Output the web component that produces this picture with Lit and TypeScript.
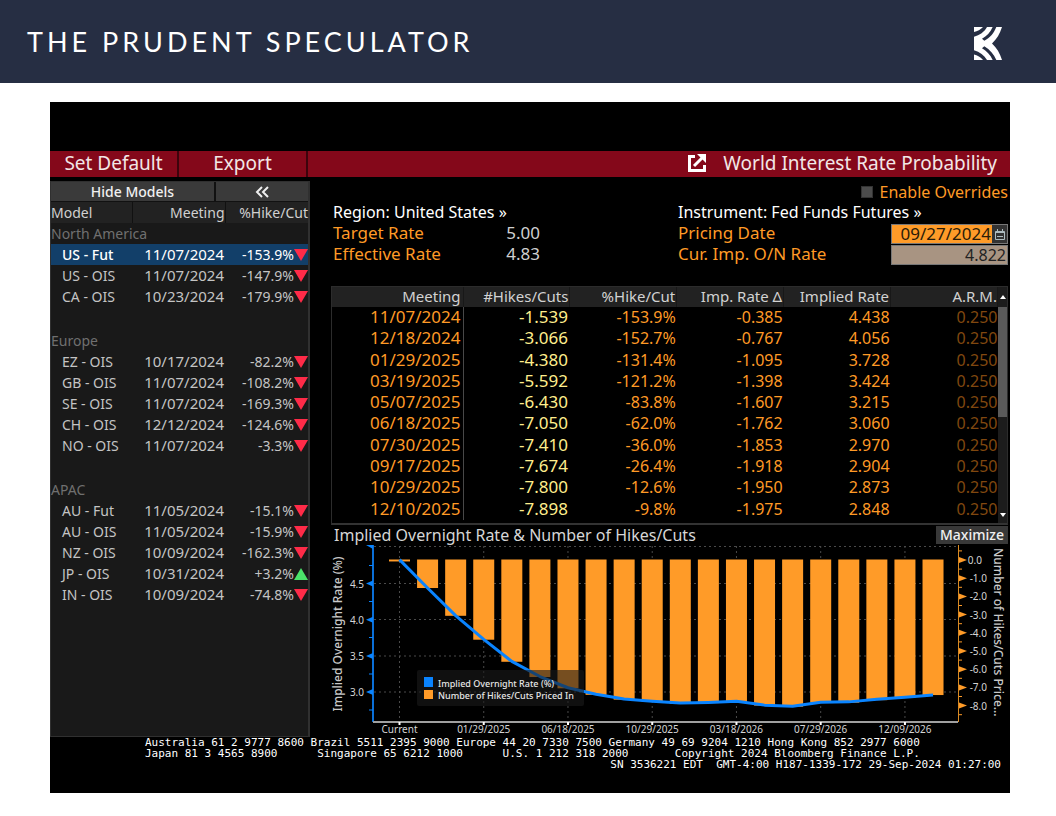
import { LitElement, html, svg, css } from "lit";
import { customElement } from "lit/decorators.js";
import { classMap } from "lit/directives/class-map.js";

type Model = [name: string, meeting: string, change: string, selected?: boolean];

const GROUPS: { name: string; rows: Model[] }[] = [
  {
    name: "North America",
    rows: [
      ["US - Fut", "11/07/2024", "-153.9%", true],
      ["US - OIS", "11/07/2024", "-147.9%"],
      ["CA - OIS", "10/23/2024", "-179.9%"],
    ],
  },
  {
    name: "Europe",
    rows: [
      ["EZ - OIS", "10/17/2024", "-82.2%"],
      ["GB - OIS", "11/07/2024", "-108.2%"],
      ["SE - OIS", "11/07/2024", "-169.3%"],
      ["CH - OIS", "12/12/2024", "-124.6%"],
      ["NO - OIS", "11/07/2024", "-3.3%"],
    ],
  },
  {
    name: "APAC",
    rows: [
      ["AU - Fut", "11/05/2024", "-15.1%"],
      ["AU - OIS", "11/05/2024", "-15.9%"],
      ["NZ - OIS", "10/09/2024", "-162.3%"],
      ["JP - OIS", "10/31/2024", "+3.2%"],
      ["IN - OIS", "10/09/2024", "-74.8%"],
    ],
  },
];

const MEETINGS: string[][] = [
  ["11/07/2024", "-1.539", "-153.9%", "-0.385", "4.438", "0.250"],
  ["12/18/2024", "-3.066", "-152.7%", "-0.767", "4.056", "0.250"],
  ["01/29/2025", "-4.380", "-131.4%", "-1.095", "3.728", "0.250"],
  ["03/19/2025", "-5.592", "-121.2%", "-1.398", "3.424", "0.250"],
  ["05/07/2025", "-6.430", "-83.8%", "-1.607", "3.215", "0.250"],
  ["06/18/2025", "-7.050", "-62.0%", "-1.762", "3.060", "0.250"],
  ["07/30/2025", "-7.410", "-36.0%", "-1.853", "2.970", "0.250"],
  ["09/17/2025", "-7.674", "-26.4%", "-1.918", "2.904", "0.250"],
  ["10/29/2025", "-7.800", "-12.6%", "-1.950", "2.873", "0.250"],
  ["12/10/2025", "-7.898", "-9.8%", "-1.975", "2.848", "0.250"],
];

// Chart series, one entry per meeting starting from the current rate.
const CUTS = [0.08, 1.539, 3.066, 4.38, 5.592, 6.43, 7.05, 7.41, 7.674, 7.8, 7.898, 7.86, 7.8, 8, 8.06, 7.84, 7.84, 7.7, 7.57, 7.42];
const RATES = [4.83, 4.438, 4.056, 3.728, 3.424, 3.215, 3.06, 2.97, 2.904, 2.873, 2.848, 2.857, 2.873, 2.82, 2.805, 2.86, 2.865, 2.9, 2.93, 2.96];
const DATES = ["Current", "01/29/2025", "06/18/2025", "10/29/2025", "03/18/2026", "07/29/2026", "12/09/2026"];

const chartX = (i: number) => 399.5 + i * 28.08;
const rateY = (r: number) => 583.5 + (4.5 - r) * 72.4;
const cutY = (c: number) => 560 + c * 18.2;

@customElement("brand-bar")
class BrandBar extends LitElement {
  static styles = css`
    :host {
      display: block;
    }
    .bar {
      display: flex;
      align-items: center;
      justify-content: space-between;
      height: 83px;
      box-sizing: border-box;
      padding: 0 54px 0 27px;
      background: #262e43;
      color: #fff;
    }
    .name {
      margin: 0;
      font: 400 27px/40px Lato, sans-serif;
      letter-spacing: 4px;
    }
    .logo {
      display: block;
      width: 28px;
      height: 33px;
      margin-top: 4px;
    }
  `;
  render() {
    return html`<header class="bar">
      <h1 class="name">THE PRUDENT SPECULATOR</h1>
      <svg class="logo" viewBox="102 82 84 98" preserveAspectRatio="none" fill="#fff" aria-hidden="true">
        <path d="M102 82H129C122 90 112 95 102 97Z" />
        <path
          d="M102 111C119 106 133 97 141 82H158C151 98 140 109 126 117L133 123C150 114 161 101 169 82H186C180 102 170 118 156 131C170 144 180 160 186 180H169C161 162 150 149 133 139L126 145C140 154 151 164 158 180H141C133 166 119 156 102 151Z"
        />
        <path d="M102 164C112 166 122 172 129 180H102Z" />
      </svg>
    </header>`;
  }
}

@customElement("model-list")
class ModelList extends LitElement {
  static styles = css`
    :host {
      display: block;
      box-sizing: border-box;
      border: 1px solid #303030;
      border-right-width: 2px;
      background: #191919;
      color: #c4c4c4;
      font: 14px/21px "Noto Sans", sans-serif;
    }
    .tools {
      display: grid;
      grid-template-columns: 163px 1fr;
      gap: 2px;
      background: #111;
      padding-bottom: 1px;
    }
    button {
      height: 19px;
      padding: 0;
      border: 0;
      background: #3a3a3a;
      color: #f0f0f0;
      font: 500 14px/19px "Noto Sans", sans-serif;
    }
    .chev {
      display: block;
      margin: auto;
    }
    table {
      width: 100%;
      border-collapse: collapse;
      table-layout: fixed;
    }
    .c1 {
      width: 81px;
    }
    .c2 {
      width: 93px;
    }
    th,
    td {
      padding: 0;
      height: 21px;
      font-weight: 400;
      text-align: right;
      white-space: nowrap;
    }
    thead th {
      background: #222;
      color: #d0d0d0;
      border-right: 1px solid #111;
    }
    thead th:last-child {
      border-right: 0;
    }
    thead th:first-child,
    .group {
      text-align: left;
    }
    .group {
      color: #707070;
    }
    .gap td {
      height: 23px;
    }
    .name {
      text-align: left;
      padding-left: 11px;
    }
    .date {
      font-size: 15px;
      padding-right: 1px;
    }
    .sel {
      background: #123f69;
      color: #fff;
      font-weight: 500;
    }
    .sel th {
      font-weight: 500;
    }
    .tri {
      display: inline-block;
      width: 14px;
      height: 12px;
      vertical-align: -1px;
    }
  `;
  render() {
    return html`<div class="tools">
        <button type="button">Hide Models</button>
        <button type="button" aria-label="Collapse">
          <svg class="chev" width="14" height="12" viewBox="0 0 14 12" fill="none" stroke="#eee" stroke-width="2">
            <path d="M7 1L2 6L7 11M13 1L8 6L13 11" />
          </svg>
        </button>
      </div>
      <table>
        <colgroup>
          <col class="c1" />
          <col class="c2" />
          <col />
        </colgroup>
        <thead>
          <tr>
            <th scope="col">Model</th>
            <th scope="col">Meeting</th>
            <th scope="col">%Hike/Cut</th>
          </tr>
        </thead>
        ${GROUPS.map(
          (g, i) => html`<tbody>
            ${i ? html`<tr class="gap"><td colspan="3"></td></tr>` : ""}
            <tr>
              <th class="group" scope="rowgroup" colspan="3">${g.name}</th>
            </tr>
            ${g.rows.map(
              ([name, date, change, selected]) => html`<tr class=${classMap({ sel: !!selected })}>
                <th class="name" scope="row">${name}</th>
                <td class="date">${date}</td>
                <td>${change}<svg class="tri" viewBox="0 0 14 12" aria-hidden="true">
                    ${change.startsWith("+")
                      ? svg`<path d="M0 12L7 0L14 12Z" fill="#4be36a" />`
                      : svg`<path d="M0 0H14L7 12Z" fill="#ff2b48" />`}
                  </svg></td>
              </tr>`
            )}
          </tbody>`
        )}
      </table>`;
  }
}

@customElement("meeting-table")
class MeetingTable extends LitElement {
  static styles = css`
    :host {
      display: grid;
      grid-template-columns: 1fr 9px;
      align-items: start;
      box-sizing: border-box;
      height: 239px;
      border: 1px solid #2c2c2c;
      border-bottom: 2px solid #333;
      color: #ff9a26;
      font: 16px/20px "Noto Sans", sans-serif;
    }
    table {
      width: 100%;
      height: 233px;
      border-collapse: collapse;
      table-layout: fixed;
    }
    .first {
      width: 131px;
    }
    th,
    td {
      padding: 0 1px 0 0;
      font-weight: 400;
      text-align: right;
      vertical-align: baseline;
      white-space: nowrap;
    }
    tr > :first-child {
      padding-right: 2px;
    }
    tr > :last-child {
      padding-right: 0;
    }
    thead th {
      height: 20px;
      line-height: 19px;
      font-size: 15px;
      background: #222;
      color: #d2d2d2;
      border-right: 1px solid #181818;
    }
    tbody th {
      font-size: 17px;
      border-right: 1px solid #484848;
    }
    tbody .cuts {
      padding-right: 2px;
      font-size: 17px;
      color: #ffee8c;
    }
    .arm {
      color: #80480f;
    }
    .scroll {
      display: flex;
      flex-direction: column;
      align-items: center;
      height: 236px;
      background: #1c1c1c;
    }
    .thumb {
      width: 9px;
      height: 110px;
      background: #5a5a5a;
    }
    .space {
      flex: 1;
    }
    .arrow {
      display: block;
      width: 10px;
      height: 20px;
    }
  `;
  render() {
    return html`<table>
        <colgroup>
          <col class="first" />
          <col span="5" />
        </colgroup>
        <thead>
          <tr>
            ${["Meeting", "#Hikes/Cuts", "%Hike/Cut", "Imp. Rate Δ", "Implied Rate", "A.R.M."].map(
              (h) => html`<th scope="col">${h}</th>`
            )}
          </tr>
        </thead>
        <tbody>
          ${MEETINGS.map(
            ([date, cuts, pct, delta, rate, arm]) => html`<tr>
              <th scope="row">${date}</th>
              <td class="cuts">${cuts}</td>
              <td>${pct}</td>
              <td>${delta}</td>
              <td>${rate}</td>
              <td class="arm">${arm}</td>
            </tr>`
          )}
        </tbody>
      </table>
      <div class="scroll">
        <svg class="arrow" viewBox="0 0 10 20"><path d="M2 12L5 8L8 12Z" fill="#fff" /></svg>
        <div class="thumb"></div>
        <div class="space"></div>
        <svg class="arrow" viewBox="0 0 10 20"><path d="M2 10H8L5 14Z" fill="#fff" /></svg>
      </div>`;
  }
}

@customElement("rate-chart")
class RateChart extends LitElement {
  static styles = css`
    :host {
      display: block;
    }
    .chart {
      display: block;
      width: 100%;
      height: auto;
      overflow: visible;
      font-family: "Noto Sans", sans-serif;
    }
    .tick {
      font-size: 10px;
      fill: #d4d4d4;
    }
    .legend {
      font-size: 9px;
      font-weight: 500;
      fill: #e6e6e6;
    }
    .title {
      font-size: 12px;
      font-weight: 500;
      fill: #c8c8c8;
    }
    .grid {
      stroke: #4a4a4a;
      stroke-dasharray: 2 3;
    }
    .line {
      fill: none;
      stroke: #0a84ff;
      stroke-width: 3;
      stroke-linejoin: round;
    }
  `;
  render() {
    const minorLeft = [565.5, 601.5, 637.5, 674, 710];
    return html`<svg class="chart" viewBox="331 545 677 192" role="img" aria-label="Implied overnight rate and number of hikes/cuts">
      ${[546.5, 583.5, 619.5, 656, 692].map((y) => svg`<path class="grid" d="M374 ${y}H957" />`)}
      ${DATES.map((_, i) => svg`<path class="grid" d="M${chartX(i * 3)} 546V722" />`)}
      ${CUTS.map((c, i) => svg`<rect x=${chartX(i) - 10.5} y="559.5" width="21" height=${cutY(c) - 559.5} fill="#ff9b28" />`)}
      <polyline class="line" points=${RATES.map((r, i) => `${chartX(i)},${rateY(r)}`).join(" ")} />
      <rect x="417" y="670" width="167" height="36" rx="2" fill="#1a1a1a" fill-opacity="0.6" />
      <rect x="424" y="677" width="9" height="10" fill="#0a84ff" />
      <rect x="424" y="690" width="9" height="9" fill="#ff9b28" />
      <text class="legend" x="438" y="687">Implied Overnight Rate (%)</text>
      <text class="legend" x="438" y="699">Number of Hikes/Cuts Priced In</text>

      <path d="M373 545V722" stroke="#0a6fd8" stroke-width="2" />
      <path d="M366 545L373 549V545Z" fill="#0a84ff" />
      ${minorLeft.map((y) => svg`<path d="M369 ${y}H373" stroke="#0a84ff" />`)}
      ${["4.5", "4.0", "3.5", "3.0"].map((t) => {
        const y = rateY(Number(t));
        return svg`<path d="M366 ${y}L373 ${y - 3}V${y + 3}Z" fill="#0a84ff" />
          <text class="tick" x="364" y=${y + 4} text-anchor="end">${t}</text>`;
      })}

      <path d="M373 722H958" stroke="#a0a0a0" stroke-width="2" />
      ${DATES.map(
        (d, i) => svg`<path d="M${chartX(i * 3)} 722V725" stroke="#fff" stroke-width="2" />
          <text class="tick" x=${chartX(i * 3)} y="733" text-anchor="middle">${d}</text>`
      )}

      <path d="M958.5 545V722" stroke="#d98a22" stroke-width="1" />
      ${[-0.5, 0, 1, 2, 3, 4, 5, 6, 7, 8].map(
        (c) => svg`<path d="M959 ${cutY(c < 0 ? c : c + 0.5)}H962" stroke="#ff9b28" />`
      )}
      ${[0, 1, 2, 3, 4, 5, 6, 7, 8].map(
        (c) => svg`<path d="M967 ${cutY(c)}L959 ${cutY(c) - 3}V${cutY(c) + 3}Z" fill="#ff9b28" />
          <text class="tick" x=${c ? 987 : 982} y=${cutY(c) + 4} text-anchor="end">${c ? "-" : ""}${c}.0</text>`
      )}
      <text class="title" transform="translate(342 634) rotate(-90)" text-anchor="middle">Implied Overnight Rate (%)</text>
      <text class="title" transform="translate(994 548) rotate(90)">Number of Hikes/Cuts Price...</text>
    </svg>`;
  }
}

@customElement("app-root")
class AppRoot extends LitElement {
  static styles = css`
    :host {
      display: block;
      background: #fff;
      font-family: "Noto Sans", sans-serif;
    }
    button,
    input {
      font-family: inherit;
    }
    .screen {
      margin: 19px 46px 23px 50px;
      padding: 49px 0 23px;
      background: #000;
    }
    .menu {
      display: flex;
      align-items: flex-start;
      height: 26px;
      background: #84081a;
      color: #f2e6e6;
      font-size: 19px;
      line-height: 24px;
    }
    .menu button {
      width: 129px;
      height: 26px;
      padding: 0 0 2px;
      border: 0;
      border-right: 2px solid #3c040c;
      background: none;
      color: inherit;
      font-size: 19px;
      line-height: 24px;
    }
    .title {
      display: flex;
      align-items: center;
      gap: 17px;
      margin: 0 13px 0 auto;
      font-size: 19px;
      font-weight: 400;
      line-height: 24px;
    }
    .body {
      display: grid;
      grid-template-columns: 260px minmax(0, 1fr);
      column-gap: 21px;
    }
    .models {
      margin-top: 4px;
    }
    .detail {
      padding-right: 2px;
    }
    .override {
      display: flex;
      justify-content: flex-end;
      align-items: center;
      gap: 7px;
      height: 18px;
      margin: 6px 0 1px;
      color: #ff9a26;
      font-size: 16px;
      line-height: 18px;
    }
    .override input {
      appearance: none;
      width: 12px;
      height: 12px;
      margin: 0;
      background: #4c4c4c;
      border: 1px solid #333;
    }
    .info {
      display: grid;
      grid-template-columns: 207px minmax(0, 1fr) 213px 117px;
      grid-auto-rows: 21px;
      padding-left: 2px;
      margin-bottom: 21px;
      color: #ff9a26;
      font-size: 17px;
      line-height: 20px;
      white-space: nowrap;
    }
    .pick {
      padding: 0;
      border: 0;
      background: none;
      color: #fff;
      text-align: left;
      font-size: 16px;
      line-height: 21px;
    }
    .left {
      grid-column: 1;
      display: flex;
      justify-content: space-between;
    }
    .value {
      color: #d0d0d0;
    }
    .right {
      grid-column: 3;
    }
    .field {
      display: flex;
      box-sizing: border-box;
      height: 20px;
      margin-top: 1px;
      border: 1px solid #777;
      background: #333;
    }
    .field input {
      flex: 1;
      min-width: 0;
      box-sizing: border-box;
      padding: 0 1px;
      border: 0;
      background: #ff9b28;
      color: #2a1c08;
      text-align: right;
      font-size: 17px;
      line-height: 18px;
    }
    .field input.locked {
      background: #a89482;
      color: #222;
      font-size: 16px;
    }
    .cal {
      width: 15px;
      padding: 0;
      border: 0;
      background: #333;
    }
    .cal svg {
      display: block;
      margin: auto;
    }
    .heading {
      display: flex;
      justify-content: space-between;
      align-items: center;
      height: 20px;
      padding-left: 3px;
      color: #d6d6d6;
    }
    .heading h2 {
      margin: 0;
      font-size: 16px;
      font-weight: 400;
      line-height: 20px;
    }
    .max {
      height: 18px;
      width: 72px;
      padding: 0;
      border: 0;
      background: #383838;
      color: #f0f0f0;
      font-size: 14px;
      font-weight: 500;
      line-height: 18px;
    }
    .contact {
      color: #fff;
      font: 11px/11px "DejaVu Sans Mono", monospace;
      white-space: pre;
      padding: 0 9px 0 95px;
    }
    .contact p {
      margin: 0;
    }
    .contact .serial {
      text-align: right;
    }
  `;
  render() {
    return html`<brand-bar></brand-bar>
      <main class="screen">
        <div class="menu">
          <button type="button">Set Default</button>
          <button type="button">Export</button>
          <h2 class="title">
            <svg width="18" height="18" viewBox="0 0 18 18" fill="none" stroke="#fff" stroke-width="3" aria-hidden="true">
              <path d="M7 2.5H1.5V16.5H16.5V11" />
              <path d="M6 12L14 4" />
              <path d="M9 0H18V9Z" fill="#fff" stroke="none" />
            </svg>
            World Interest Rate Probability
          </h2>
        </div>
        <div class="body">
          <model-list class="models"></model-list>
          <section class="detail">
            <label class="override"><input type="checkbox" />Enable Overrides</label>
            <div class="info">
              <button class="pick left" type="button">Region: United States »</button>
              <button class="pick right" type="button">Instrument: Fed Funds Futures »</button>
              <div class="left"><span>Target Rate</span><span class="value">5.00</span></div>
              <label class="right" for="pricing">Pricing Date</label>
              <div class="field">
                <input id="pricing" type="text" value="09/27/2024" />
                <button class="cal" type="button" aria-label="Open calendar">
                  <svg width="10" height="11" viewBox="0 0 10 11" fill="none" stroke="#aebcc0">
                    <path d="M.5 2.5H9.5V10.5H.5ZM0 3.5H10M2.5 0V3M7.5 0V3M2 7.5H8" />
                  </svg>
                </button>
              </div>
              <div class="left"><span>Effective Rate</span><span class="value">4.83</span></div>
              <label class="right" for="overnight">Cur. Imp. O/N Rate</label>
              <div class="field"><input class="locked" id="overnight" type="text" value="4.822" readonly /></div>
            </div>
            <meeting-table></meeting-table>
            <div class="heading">
              <h2>Implied Overnight Rate &amp; Number of Hikes/Cuts</h2>
              <button class="max" type="button">Maximize</button>
            </div>
            <rate-chart></rate-chart>
          </section>
        </div>
        <footer class="contact"><p>Australia 61 2 9777 8600 Brazil 5511 2395 9000 Europe 44 20 7330 7500 Germany 49 69 9204 1210 Hong Kong 852 2977 6000</p><p>Japan 81 3 4565 8900      Singapore 65 6212 1000      U.S. 1 212 318 2000       Copyright 2024 Bloomberg Finance L.P.</p><p class="serial">SN 3536221 EDT  GMT-4:00 H187-1339-172 29-Sep-2024 01:27:00</p></footer>
      </main>`;
  }
}
